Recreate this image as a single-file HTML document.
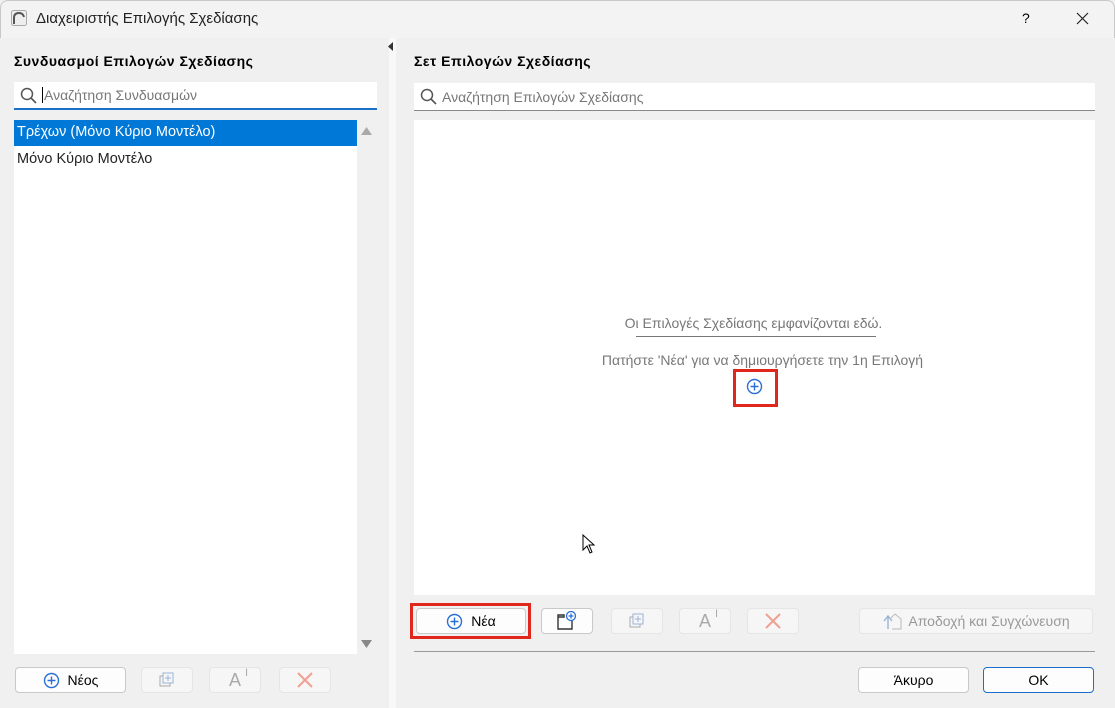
<!DOCTYPE html>
<html><head><meta charset="utf-8"><style>
*{box-sizing:border-box;margin:0;padding:0}
body{width:1115px;height:708px;overflow:hidden;background:#f0f0f0;font-family:"Liberation Sans","DejaVu Sans",sans-serif;font-size:13px;color:#000;position:relative}
.abs{position:absolute}
.title{left:0;top:0;width:1115px;height:38px;background:#f3f3f3;border:1px solid #c8c8c8;border-bottom:none;border-radius:8px 8px 0 0}
.btn{position:absolute;height:26px;background:#fdfdfd;border:1px solid #c9c9c9;border-radius:4px;display:flex;align-items:center;justify-content:center;font-size:14px}
.dis{background:#f6f6f6;border-color:#e5e5e5;color:#a0a0a0}
.h{font-weight:bold;font-size:14px;letter-spacing:0.5px}
.search{background:#fff;border-bottom:1px solid #888;height:28px;display:flex;align-items:center;color:#777;font-size:14px}
.ai{font-size:18px;color:#aaa;position:relative}
.ai i{font-style:normal;font-size:11px;position:absolute;top:-3px;right:-7px}
</style></head><body>
<div class="abs title"></div>
<svg class="abs" style="left:11px;top:10px" width="16" height="16" viewBox="0 0 16 16"><rect x="0.5" y="0.5" width="15" height="15" rx="2" fill="#eee" stroke="#aaa"/><path d="M3 14 V8 Q3 3 8 3 Q12 3 13 7" fill="none" stroke="#555" stroke-width="2"/></svg>
<div class="abs" style="left:36px;top:10px;font-size:15px;color:#222">Διαχειριστής Επιλογής Σχεδίασης</div>
<div class="abs" style="left:1022px;top:10px;font-size:14px">?</div>
<svg class="abs" style="left:1076px;top:12px" width="13" height="13"><path d="M1 1L12 12M12 1L1 12" stroke="#222" stroke-width="1.2"/></svg>
<div class="abs" style="left:389px;top:38px;width:7px;height:670px;background:#f8f8f8"></div>
<svg class="abs" style="left:388px;top:42px" width="6" height="9"><path d="M5 0V9L0 4.5Z" fill="#333"/></svg>
<div class="abs h" style="left:14px;top:53px">Συνδυασμοί Επιλογών Σχεδίασης</div>
<div class="abs search" style="left:14px;top:82px;width:363px;border-bottom:2px solid #1a6fc9">
<svg style="margin-left:6px" width="17" height="17"><circle cx="7" cy="7" r="5.5" fill="none" stroke="#555" stroke-width="1.5"/><path d="M11 11L16 16" stroke="#555" stroke-width="1.6"/></svg>
<span style="margin-left:5px;border-left:1px solid #000;padding-left:1px">Αναζήτηση Συνδυασμών</span></div>
<div class="abs" style="left:14px;top:120px;width:343px;height:534px;background:#fff"></div>
<div class="abs" style="left:14px;top:120px;width:343px;height:26px;background:#0078d7;color:#fff;font-size:14.5px;padding:4px 0 0 3px">Τρέχων (Μόνο Κύριο Μοντέλο)</div>
<div class="abs" style="left:17px;top:151px;font-size:14.5px;color:#222">Μόνο Κύριο Μοντέλο</div>
<svg class="abs" style="left:361px;top:127px" width="11" height="8"><path d="M0 8L5.5 0L11 8Z" fill="#aaa"/></svg>
<svg class="abs" style="left:361px;top:640px" width="11" height="8"><path d="M0 0L5.5 8L11 0Z" fill="#888"/></svg>
<div class="btn" style="left:15px;top:667px;width:111px"><svg width="17" height="17"><circle cx="8.5" cy="8.5" r="7" fill="none" stroke="#2a6fd6" stroke-width="1.4"/><path d="M8.5 4.5V12.5M4.5 8.5H12.5" stroke="#2a6fd6" stroke-width="1.4"/></svg><span style="margin-left:8px">Νέος</span></div>
<div class="btn dis" style="left:141px;top:667px;width:52px"><svg width="18" height="18"><rect x="2" y="5" width="10" height="10" fill="none" stroke="#aaa"/><rect x="5" y="2" width="10" height="10" fill="#f6f6f6" stroke="#9bb3d8"/><path d="M10 4V10M7 7H13" stroke="#9bb3d8"/></svg></div>
<div class="btn dis" style="left:209px;top:667px;width:52px"><span class="ai">A<i>I</i></span></div>
<div class="btn dis" style="left:279px;top:667px;width:52px"><svg width="16" height="16"><path d="M1 1L15 15M15 1L1 15" stroke="#f0a090" stroke-width="2"/></svg></div>

<div class="abs h" style="left:414px;top:53px">Σετ Επιλογών Σχεδίασης</div>
<div class="abs search" style="left:414px;top:83px;width:681px">
<svg style="margin-left:6px" width="17" height="17"><circle cx="7" cy="7" r="5.5" fill="none" stroke="#555" stroke-width="1.5"/><path d="M11 11L16 16" stroke="#555" stroke-width="1.6"/></svg>
<span style="margin-left:5px">Αναζήτηση Επιλογών Σχεδίασης</span></div>
<div class="abs" style="left:414px;top:120px;width:681px;height:475px;background:#fff"></div>
<div class="abs" style="left:414px;top:315px;width:681px;text-align:center;color:#777;font-size:14px;padding-right:2px">Οι Επιλογές Σχεδίασης εμφανίζονται εδώ.</div>
<div class="abs" style="left:636px;top:336px;width:240px;height:1px;background:#777"></div>
<div class="abs" style="left:414px;top:352px;width:681px;text-align:center;color:#777;font-size:14px;padding-left:16px">Πατήστε 'Νέα' για να δημιουργήσετε την 1η Επιλογή</div>
<div class="abs" style="left:733px;top:369px;width:45px;height:38px;border:3px solid #e0271e"></div>
<svg class="abs" style="left:746px;top:378px" width="17" height="17"><circle cx="8.5" cy="8.5" r="7" fill="none" stroke="#2a6fd6" stroke-width="1.4"/><path d="M8.5 4.5V12.5M4.5 8.5H12.5" stroke="#2a6fd6" stroke-width="1.4"/></svg>
<svg class="abs" style="left:582px;top:534px" width="14" height="20"><path d="M1 1V16L5 12L8 19L10 18L7 11H12Z" fill="#fff" stroke="#000"/></svg>

<div class="abs" style="left:410px;top:603px;width:121px;height:36px;border:3px solid #e0271e"></div>
<div class="btn" style="left:416px;top:608px;width:110px"><svg width="17" height="17"><circle cx="8.5" cy="8.5" r="7" fill="none" stroke="#2a6fd6" stroke-width="1.4"/><path d="M8.5 4.5V12.5M4.5 8.5H12.5" stroke="#2a6fd6" stroke-width="1.4"/></svg><span style="margin-left:8px">Νέα</span></div>
<div class="btn" style="left:541px;top:608px;width:52px"><svg width="22" height="20"><path d="M2 6V18H16V10M2 6H8V4H2Z" fill="none" stroke="#333" stroke-width="1.4"/><circle cx="15" cy="5" r="4.5" fill="#fff" stroke="#2a6fd6" stroke-width="1.3"/><path d="M15 2.5V7.5M12.5 5H17.5" stroke="#2a6fd6" stroke-width="1.3"/></svg></div>
<div class="btn dis" style="left:611px;top:608px;width:52px"><svg width="18" height="18"><rect x="2" y="5" width="10" height="10" fill="none" stroke="#aaa"/><rect x="5" y="2" width="10" height="10" fill="#f6f6f6" stroke="#9bb3d8"/><path d="M10 4V10M7 7H13" stroke="#9bb3d8"/></svg></div>
<div class="btn dis" style="left:679px;top:608px;width:52px"><span class="ai">A<i>I</i></span></div>
<div class="btn dis" style="left:747px;top:608px;width:52px"><svg width="16" height="16"><path d="M1 1L15 15M15 1L1 15" stroke="#f0a090" stroke-width="2"/></svg></div>
<div class="btn dis" style="left:859px;top:608px;width:234px;color:#999"><svg width="22" height="20"><path d="M6 18V6M2 10L6 5L10 10" fill="none" stroke="#9bb3d8" stroke-width="1.4"/><path d="M8 8L13 3L19 8V18H10" fill="none" stroke="#bbb"/></svg><span style="margin-left:4px">Αποδοχή και Συγχώνευση</span></div>
<div class="abs" style="left:414px;top:651px;width:681px;height:1px;background:#999"></div>
<div class="btn" style="left:858px;top:667px;width:111px">Άκυρο</div>
<div class="btn" style="left:983px;top:667px;width:111px;border-color:#1a6fc9">OK</div>
</body></html>
